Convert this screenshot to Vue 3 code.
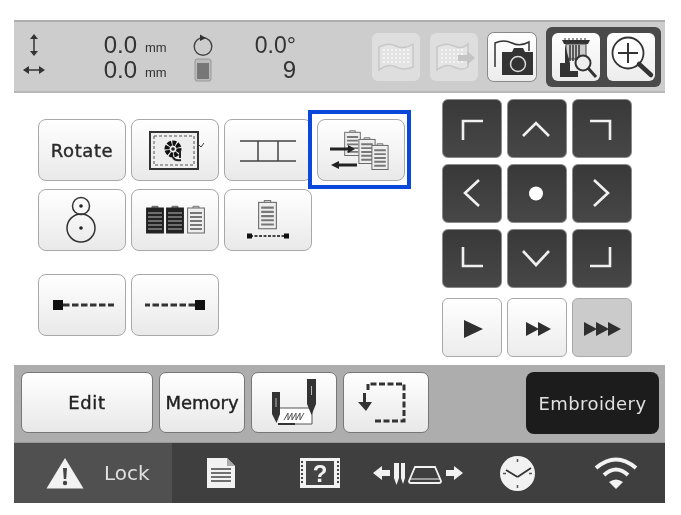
<script setup>
const padIcons = [
  'M21 41V22H41',
  'M16 37L29 24L42 37',
  'M18 22H38V41',
  'M37 16L23 29L37 42',
  null,
  'M22 16L36 29L22 42',
  'M21 18V37H41',
  'M16 22L29 36L42 22',
  'M38 18V37H18',
]
const speeds = [
  { id: 'one', points: ['22,22 41,31 22,40'] },
  { id: 'two', points: ['19,24 32,31 19,38', '31,24 44,31 31,38'] },
  { id: 'three', points: ['12,24 25,31 12,38', '24,24 37,31 24,38', '36,24 49,31 36,38'], active: true },
]
</script>

<template>
  <div class="screen">
    <svg class="defs" width="0" height="0" aria-hidden="true">
      <symbol id="clip" viewBox="0 0 18 28">
        <path d="M6 2.500V.8h6v1.700" fill="#ddd" stroke="#777" />
        <rect x=".6" y="2.500" width="16.800" height="25" fill="#eee" stroke="#666" />
        <path d="M3 7.500h12M3 11.500h12M3 15.500h12M3 19.500h12M3 23.500h12" stroke="#777" stroke-width="2" />
      </symbol>
      <symbol id="clip-dark" viewBox="0 0 18 28">
        <path d="M6 2.500V.8h6v1.700" fill="#888" stroke="#666" />
        <rect x=".6" y="2.500" width="16.800" height="25" fill="#222" stroke="#222" />
        <path d="M2 7.500h14M2 11.500h14M2 15.500h14M2 19.500h14M2 23.500h14" stroke="#888" stroke-width="1.600" />
      </symbol>
    </svg>

    <header class="top-bar">
      <div class="status">
        <svg class="st-icon" width="12" height="22" viewBox="0 0 12 22"><path d="M6 3V19" stroke="#333" stroke-width="1.500" /><path d="M6 0L10 5H2ZM6 22L10 17H2Z" fill="#333" /></svg>
        <span class="value">0.0</span><span class="unit">mm</span>
        <svg class="st-icon" width="22" height="24" viewBox="0 0 22 24"><circle cx="11" cy="13.500" r="8.800" fill="none" stroke="#444" stroke-width="1.400" /><path d="M8 1.500L14 5L8 8Z" fill="#333" /></svg>
        <span class="value angle">0.0°</span>

        <svg class="st-icon" width="22" height="10" viewBox="0 0 22 10"><path d="M3 5H19" stroke="#333" stroke-width="1.500" /><path d="M0 5L6 1V9ZM22 5L16 1V9Z" fill="#333" /></svg>
        <span class="value">0.0</span><span class="unit">mm</span>
        <svg class="st-icon" width="18" height="24" viewBox="0 0 18 24"><rect x="1" y="1" width="16" height="22" rx="2" fill="#bbb" stroke="#999" /><rect x="3" y="5" width="12" height="16" fill="#777" /></svg>
        <span class="value">9</span>
      </div>

      <div class="top-tools">
        <button class="tool tool-off">
          <svg width="48" height="48" viewBox="0 0 48 48"><path d="M7 14Q16 9 24 13T41 11V34Q32 38 24 34T7 37Z" fill="#e4e4e4" stroke="#c8c8c8" stroke-width="1.500" /><path d="M11 17H37M11 21H37M11 25H37M11 29H37" stroke="#f4f4f4" stroke-dasharray="2 2" stroke-width="2" /></svg>
        </button>
        <button class="tool tool-off">
          <svg width="48" height="48" viewBox="0 0 48 48"><path d="M7 14Q16 9 24 13T38 11V34Q32 38 24 34T7 37Z" fill="#e4e4e4" stroke="#c8c8c8" stroke-width="1.500" /><path d="M11 17H33M11 21H33M11 25H33M11 29H33" stroke="#f4f4f4" stroke-dasharray="2 2" stroke-width="2" /><path d="M28 22H37V18L45 25L37 32V28H28Z" fill="#c4c4c4" /></svg>
        </button>
        <button class="tool tool-on">
          <svg width="48" height="48" viewBox="0 0 48 48"><path d="M7 34V10Q16 6 24 10T41 9V18" fill="none" stroke="#333" stroke-width="1.500" /><path d="M14 19H24L26 15H35L37 19H45V42H14Z" fill="#333" /><circle cx="30" cy="31" r="7.500" fill="#333" stroke="#ddd" stroke-width="1.500" /></svg>
        </button>
        <div class="tool-group">
          <button class="tool tool-on">
            <svg width="48" height="48" viewBox="0 0 48 48">
              <path d="M10 7H38L36 11H12Z" fill="#333" />
              <path d="M13 5V8M17 5V8M21 5V8M25 5V8M29 5V8M33 5V8" stroke="#333" />
              <path d="M14 11H34V26H14Z" fill="#ccc" stroke="#444" />
              <path d="M18 12V28M21 12V28M24 12V28M27 12V24" stroke="#333" stroke-width="1.500" />
              <path d="M13 12V30H8V44H26V38H18V30" fill="#333" />
              <circle cx="31" cy="30" r="7.500" fill="#eee" stroke="#333" stroke-width="2" />
              <path d="M36 35L44 44" stroke="#333" stroke-width="3" />
            </svg>
          </button>
          <button class="tool tool-on">
            <svg width="48" height="48" viewBox="0 0 48 48"><circle cx="21" cy="20" r="15.500" fill="#fff" stroke="#333" stroke-width="1.800" /><path d="M21 10V30M11 20H31" stroke="#333" stroke-width="2" /><path d="M32 31L44 42" stroke="#333" stroke-width="4.500" stroke-linecap="round" /></svg>
          </button>
        </div>
      </div>
    </header>

    <main class="body">
      <section class="functions">
        <button class="fn"><span class="label">Rotate</span></button>
        <button class="fn">
          <svg width="88" height="62" viewBox="0 0 88 62">
            <rect x="19" y="13" width="48" height="37" fill="#eee" stroke="#333" stroke-width="2" />
            <rect x="23" y="17" width="40" height="29" fill="none" stroke="#555" stroke-dasharray="3 2" />
            <circle cx="42" cy="30" r="6" fill="none" stroke="#111" stroke-width="5" stroke-dasharray="3.500 1" />
            <circle cx="42" cy="30" r="1.800" fill="#222" />
            <path d="M42 38Q43 42 50 41M49 31V39" stroke="#222" stroke-width="2" fill="none" />
            <path d="M68 26L70 28L73 24" stroke="#444" fill="none" />
          </svg>
        </button>
        <button class="fn">
          <svg width="88" height="62" viewBox="0 0 88 62"><path d="M16 22H72M16 42H72M34 22V42M54 22V42" stroke="#444" stroke-width="1.500" /></svg>
        </button>
        <button class="fn fn-selected">
          <svg width="88" height="62" viewBox="0 0 88 62">
            <use href="#clip" x="27" y="11" width="17" height="26" />
            <use href="#clip" x="41" y="18" width="18" height="27" />
            <use href="#clip" x="54" y="24" width="18" height="27" />
            <path d="M13 30H32" stroke="#222" stroke-width="3" />
            <path d="M38 30L31 26V34Z" fill="#222" />
            <path d="M21 46H40" stroke="#222" stroke-width="3" />
            <path d="M14 46L22 42V50Z" fill="#222" />
          </svg>
        </button>

        <button class="fn">
          <svg width="88" height="62" viewBox="0 0 88 62"><circle cx="43" cy="17" r="8.500" fill="none" stroke="#333" stroke-width="1.500" /><circle cx="43" cy="17" r="1.800" fill="#222" /><circle cx="43" cy="39" r="14" fill="none" stroke="#333" stroke-width="1.500" /><circle cx="43" cy="39" r="1.800" fill="#222" /></svg>
        </button>
        <button class="fn">
          <svg width="88" height="62" viewBox="0 0 88 62">
            <use href="#clip-dark" x="15" y="16" width="18" height="29" />
            <use href="#clip-dark" x="35" y="16" width="18" height="29" />
            <use href="#clip" x="56" y="16" width="18" height="29" />
          </svg>
        </button>
        <button class="fn">
          <svg width="88" height="62" viewBox="0 0 88 62">
            <use href="#clip" x="34" y="9" width="19" height="33" />
            <path d="M26 47H62" stroke="#444" stroke-width="2" stroke-dasharray="3 1.500" />
            <rect x="23" y="44.500" width="5" height="5" fill="#111" />
            <rect x="60" y="44.500" width="5" height="5" fill="#111" />
          </svg>
        </button>
        <div></div>

        <div class="spacer"></div>

        <button class="fn">
          <svg width="88" height="62" viewBox="0 0 88 62"><rect x="15" y="26" width="10" height="10" fill="#111" /><path d="M25 31H76" stroke="#333" stroke-width="3" stroke-dasharray="6.500 2.500" /></svg>
        </button>
        <button class="fn">
          <svg width="88" height="62" viewBox="0 0 88 62"><rect x="64" y="26" width="10" height="10" fill="#111" /><path d="M64 31H14" stroke="#333" stroke-width="3" stroke-dasharray="6.500 2.500" /></svg>
        </button>
      </section>

      <section class="controls">
        <div class="pad">
          <button v-for="(d, i) in padIcons" :key="i" class="pad-btn">
            <svg width="60" height="59" viewBox="0 0 60 59">
              <path v-if="d" :d="d" fill="none" stroke="#f0f0f0" stroke-width="2.600" />
              <circle v-else cx="29" cy="29.500" r="7" fill="#fff" />
            </svg>
          </button>
        </div>
        <div class="speeds">
          <button v-for="s in speeds" :key="s.id" class="speed" :class="{ 'speed-on': s.active }">
            <svg width="60" height="59" viewBox="0 0 60 59">
              <polygon v-for="p in s.points" :key="p" :points="p" fill="#2f2f2f" />
            </svg>
          </button>
        </div>
      </section>
    </main>

    <nav class="tabs">
      <button class="tab tab-edit"><span class="label">Edit</span></button>
      <button class="tab tab-memory"><span class="label">Memory</span></button>
      <button class="tab tab-icon">
        <svg width="86" height="61" viewBox="0 0 86 61">
          <path d="M28 36H61V52H28" fill="#fff" stroke="#555" />
          <path d="M33 48L37 41V48L41 41V48L45 41V48L49 41V48L53 41" stroke="#555" fill="none" />
          <path d="M21 20H29V42L25.500 51L21 42Z" fill="#333" />
          <path d="M25 26V35" stroke="#bbb" />
          <path d="M56 7H65V32L60.500 43L56 32Z" fill="#333" />
          <path d="M60.500 14V23" stroke="#bbb" />
          <path d="M27 52H44" stroke="#333" stroke-width="2" />
        </svg>
      </button>
      <button class="tab tab-icon">
        <svg width="85" height="61" viewBox="0 0 85 61">
          <path d="M24 18V12H60V49H30" fill="none" stroke="#333" stroke-width="3" stroke-dasharray="6 2.500" />
          <path d="M22 21V30H28L22 39L14 30H19V21Z" fill="#333" />
        </svg>
      </button>
      <button class="tab-dark"><span class="label">Embroidery</span></button>
    </nav>

    <footer class="status-bar">
      <div class="lock">
        <svg width="38" height="32" viewBox="0 0 38 32"><path d="M19 1L37.500 31.500H.5Z" fill="#f2f2f2" /><path d="M17 11H21L20.200 22H17.800Z" fill="#444" /><circle cx="19" cy="26" r="2.200" fill="#444" /></svg>
        <span>Lock</span>
      </div>
      <div class="cell">
        <svg width="30" height="30" viewBox="0 0 30 30"><path d="M1 0H21L29 8V30H1Z" fill="#f2f2f2" /><path d="M21 0V8H29" fill="#aaa" /><path d="M5 11H25M5 15H25M5 19H25M5 23H25" stroke="#444" stroke-width="1.500" /></svg>
      </div>
      <div class="cell">
        <svg width="40" height="30" viewBox="0 0 40 30"><rect x="0" y="0" width="40" height="30" fill="#f2f2f2" /><path d="M2 3V27M38 3V27" stroke="#444" stroke-width="2" stroke-dasharray="2 2" /><rect x="6" y="3" width="28" height="24" fill="#444" /><text x="20" y="24" class="qmark">?</text></svg>
      </div>
      <div class="cell">
        <svg width="90" height="24" viewBox="0 0 90 24">
          <path d="M0 12L9 5V9H17V15H9V19Z" fill="#f2f2f2" />
          <path d="M21 2H26V17L23.500 24L21 17ZM28 2H32V17L30 23L28 17Z" fill="#f2f2f2" />
          <path d="M36 20L42 6H62L68 20Q68 22 66 22H38Q36 22 36 20Z" fill="none" stroke="#f2f2f2" stroke-width="1.800" />
          <path d="M37 18H67" stroke="#f2f2f2" />
          <path d="M90 12L81 5V9H73V15H81V19Z" fill="#f2f2f2" />
        </svg>
      </div>
      <div class="cell">
        <svg width="35" height="35" viewBox="0 0 35 35"><circle cx="17.500" cy="17.500" r="17.500" fill="#f2f2f2" /><path d="M17.500 21L6 14M17.500 21L31 12" stroke="#333" stroke-width="1.800" /><path d="M17.500 3V6M17.500 29V32M3 17.500H6M29 17.500H32" stroke="#555" stroke-width="1.500" /></svg>
      </div>
      <div class="cell">
        <svg width="44" height="32" viewBox="0 0 44 32"><path d="M2 11Q22 -6 42 11" fill="none" stroke="#f2f2f2" stroke-width="4" /><path d="M10 18Q22 7 34 18" fill="none" stroke="#f2f2f2" stroke-width="4" /><path d="M15 25Q22 20 29 25L22 32Z" fill="#f2f2f2" /></svg>
      </div>
    </footer>
  </div>
</template>

<style>
html, body {
  background: #fff;
}
</style>

<style scoped>
.screen {
  width: 651px;
  height: 483px;
  margin: 20px 0 0 14px;
  display: flex;
  flex-direction: column;
  font-family: "Liberation Sans", Arial, sans-serif;
  filter: blur(0.6px);
}

.defs {
  position: absolute;
}

button {
  padding: 0;
  margin: 0;
  font-family: inherit;
  display: flex;
  align-items: center;
  justify-content: center;
}

.label {
  font-family: "DejaVu Sans", sans-serif;
  font-size: 18px;
  letter-spacing: 0.6px;
  color: #2a2a2a;
  -webkit-text-stroke: 0.4px currentColor;
}

.top-bar {
  height: 73px;
  box-sizing: border-box;
  flex-shrink: 0;
  display: flex;
  align-items: center;
  justify-content: space-between;
  padding-right: 4px;
  background: #cdcdcd;
  border-top: 2px solid #adadad;
  border-bottom: 2px solid #b8b8b8;
}

.status {
  display: grid;
  grid-template-columns: 40px 83px 38px 56px 65px;
  grid-auto-rows: 25px;
  align-items: center;
  padding-top: 2px;
  color: #333;
}

.st-icon {
  justify-self: center;
}

.value {
  font-size: 24px;
  text-align: right;
}

.angle {
  font-size: 23px;
}

.unit {
  font-size: 13px;
  padding: 4px 0 0 8px;
}

.top-tools {
  display: flex;
  align-items: center;
  gap: 10px;
}

.tool {
  width: 48px;
  height: 48px;
  border-radius: 6px;
  box-sizing: border-box;
  border: none;
}

.tool svg {
  flex-shrink: 0;
}

.tool-off {
  background: #dedede;
}

.tool-on {
  background: linear-gradient(#fff, #ececec);
  box-shadow: 0 0 0 1px #888;
}

.tool-group {
  display: flex;
  gap: 7px;
  padding: 6px;
  border-radius: 6px;
  background: #4a4a4a;
}

.tool-group .tool-on {
  box-shadow: none;
}

.body {
  height: 272px;
  flex-shrink: 0;
  display: flex;
  justify-content: space-between;
  background: #fff;
}

.functions {
  display: grid;
  grid-template-columns: repeat(4, 88px);
  grid-template-rows: 62px 62px 7px 62px;
  gap: 8px 5px;
  align-content: start;
  padding: 26px 0 0 24px;
}

.spacer {
  grid-column: 1 / -1;
}

.fn {
  position: relative;
  width: 88px;
  height: 62px;
  box-sizing: border-box;
  border: 1.500px solid #a8a8a8;
  border-radius: 8px;
  background: linear-gradient(#fff, #e9e9e9);
}

.fn svg {
  flex-shrink: 0;
  margin: -2px;
}

.fn-selected::after {
  content: "";
  position: absolute;
  top: -10px;
  left: -10px;
  right: -7px;
  bottom: -9px;
  border: 4px solid #0a48dc;
}

.controls {
  padding: 6px 33px 0 0;
  display: flex;
  flex-direction: column;
  gap: 10px;
}

.pad, .speeds {
  display: grid;
  grid-template-columns: repeat(3, 60px);
  gap: 6px 5px;
}

.pad-btn, .speed {
  width: 60px;
  height: 59px;
  box-sizing: border-box;
  border-radius: 6px;
}

.pad-btn svg, .speed svg {
  flex-shrink: 0;
  margin: -2px;
}

.pad-btn {
  border: 1px solid #8a8a8a;
  background: linear-gradient(#393939, #474747);
}

.speed {
  border: 1.500px solid #a8a8a8;
  background: linear-gradient(#fff, #ececec);
}

.speed-on {
  background: #cbcbcb;
}

.tabs {
  height: 78px;
  flex-shrink: 0;
  box-sizing: border-box;
  display: flex;
  gap: 6px;
  align-items: flex-start;
  padding: 7px 6px 0 7px;
  background: #adadad;
  border-bottom: 1px solid #999;
}

.tab {
  height: 61px;
  box-sizing: border-box;
  border: 1px solid #777;
  border-radius: 7px;
  background: linear-gradient(#fff, #e8e8e8);
}

.tab svg {
  flex-shrink: 0;
  margin: -1px;
}

.tab .label {
  color: #222;
}

.tab-edit {
  width: 132px;
}

.tab-memory {
  width: 86px;
}

.tab-memory .label {
  letter-spacing: 0;
}

.tab-icon {
  width: 86px;
}

.tab-dark {
  width: 133px;
  height: 62px;
  margin-left: auto;
  border: none;
  border-radius: 8px;
  background: #1c1c1c;
}

.tab-dark .label {
  color: #e0e0e0;
  letter-spacing: 0.4px;
  -webkit-text-stroke: 0;
}

.status-bar {
  flex: 1;
  display: flex;
  background: #3f3f3f;
}

.lock {
  width: 158px;
  flex-shrink: 0;
  box-sizing: border-box;
  display: flex;
  align-items: center;
  gap: 20px;
  padding-left: 32px;
  background: #505050;
  font-family: "DejaVu Sans", sans-serif;
  font-size: 20px;
  color: #e0e0e0;
}

.cell {
  flex: 1;
  display: flex;
  align-items: center;
  justify-content: center;
}

.qmark {
  font-family: "Liberation Sans", sans-serif;
  font-size: 24px;
  font-weight: 700;
  fill: #f2f2f2;
  text-anchor: middle;
}
</style>
